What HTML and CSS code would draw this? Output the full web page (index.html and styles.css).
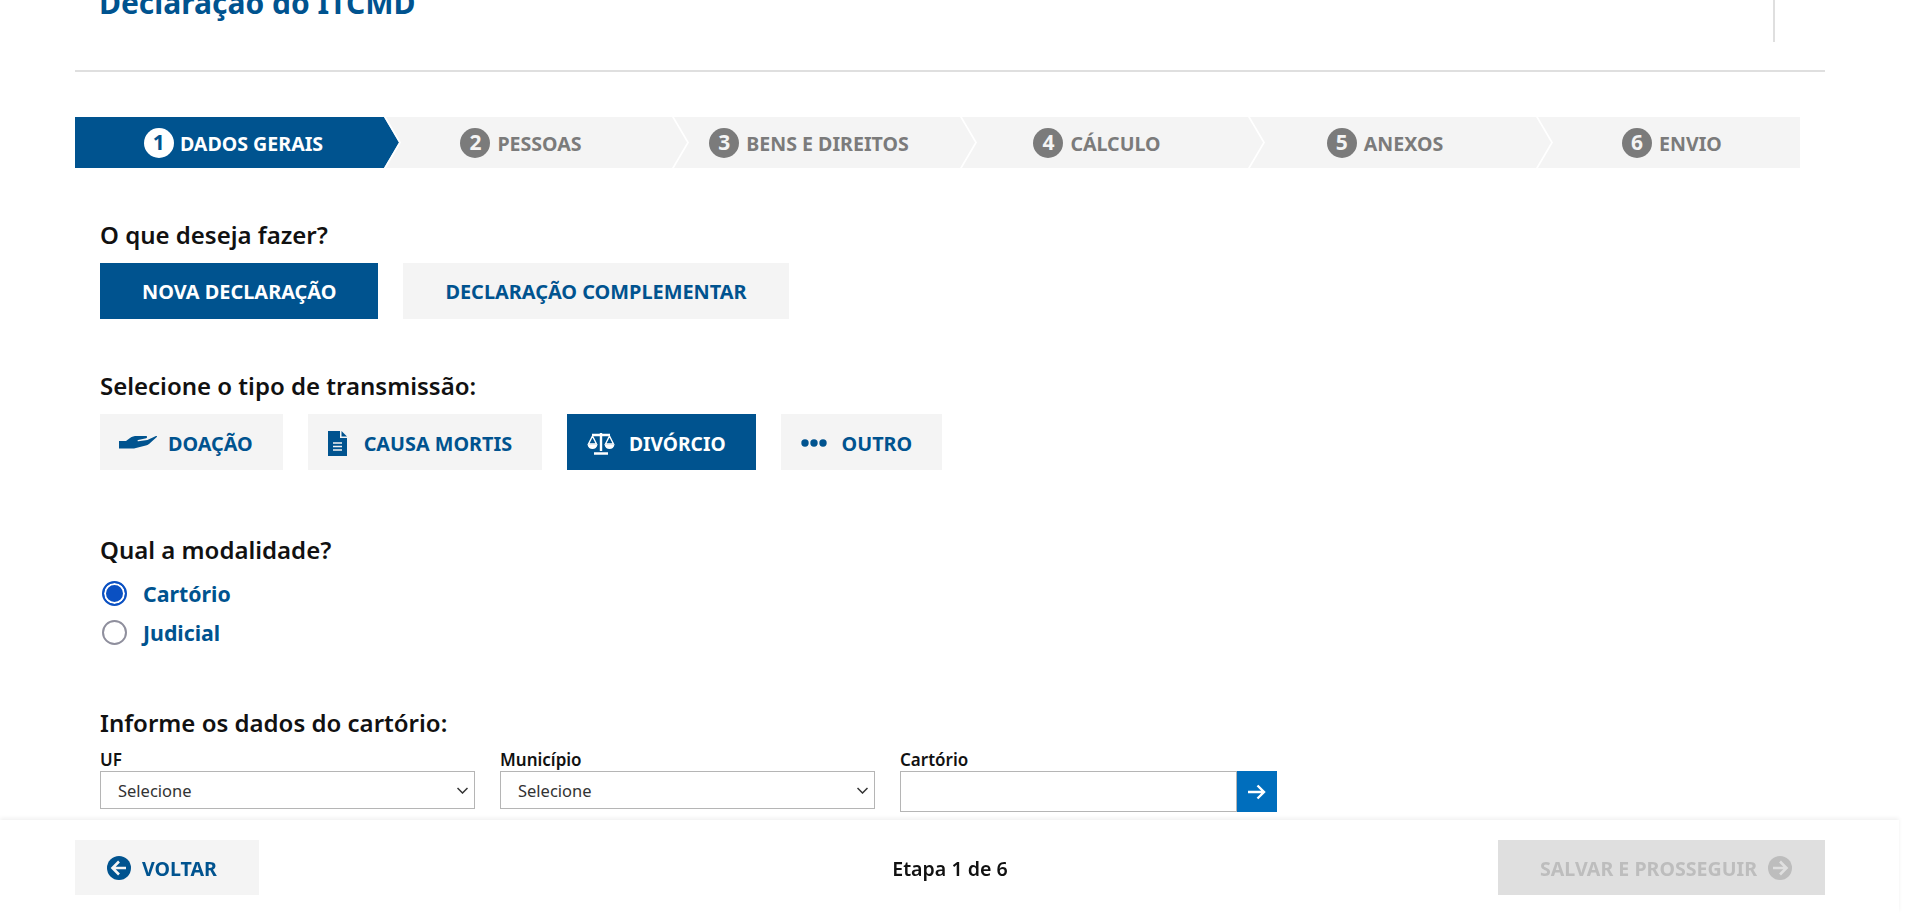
FILE: index.html
```html
<!DOCTYPE html>
<html lang="pt-BR">
<head>
  <meta charset="utf-8">
  <title>Declaração do ITCMD</title>
  <link rel="stylesheet" href="styles.css">
</head>
<body>
  <div class="page">
    <header class="top">
      <h1 class="title">Declaração do ITCMD</h1>
      <div class="top-sep"></div>
    </header>

    <ol class="steps">
      <li class="step active"><span class="num">1</span><span class="label">DADOS GERAIS</span></li>
      <li class="step"><span class="num">2</span><span class="label">PESSOAS</span></li>
      <li class="step"><span class="num">3</span><span class="label">BENS E DIREITOS</span></li>
      <li class="step"><span class="num">4</span><span class="label">CÁLCULO</span></li>
      <li class="step"><span class="num">5</span><span class="label">ANEXOS</span></li>
      <li class="step"><span class="num">6</span><span class="label">ENVIO</span></li>
    </ol>

    <section class="block block-action">
      <h2 class="question">O que deseja fazer?</h2>
      <div class="choices">
        <button class="choice wide selected">NOVA DECLARAÇÃO</button>
        <button class="choice wide">DECLARAÇÃO COMPLEMENTAR</button>
      </div>
    </section>

    <section class="block block-type">
      <h2 class="question">Selecione o tipo de transmissão:</h2>
      <div class="choices">
        <button class="choice">
          <svg class="ico ico-hand" width="38" height="14" viewBox="0 0 38 14"><path fill="currentColor" d="M0 5h7l4-3c2-1.500 4-2 7-2h9c1.300 0 1.500 1.800.2 2.200l-8 1.800c-1 .3-.8 1.300.2 1.200l9-1.200L37 0c.8-.3 1.300.4.8 1L30 8c-1 .9-2 1.400-3.200 1.600L15 12.500H0z"/></svg>
          DOAÇÃO
        </button>
        <button class="choice">
          <svg class="ico ico-file" width="19" height="25" viewBox="0 0 19 25"><path fill="currentColor" d="M0 0h12v7h7v18H0z"/><path fill="currentColor" d="M13.500 0 19 5.500h-5.500z"/><path stroke="#f4f4f4" stroke-width="1.500" d="M5 12h9M5 15.500h9M5 19h9"/></svg>
          CAUSA MORTIS
        </button>
        <button class="choice tight selected">
          <svg class="ico" width="28" height="23" viewBox="0 0 28 23" fill="none" stroke="currentColor" stroke-width="1.800"><path d="M5 3h18M14 1v18M7 21.500h14" stroke-width="2.400"/><path d="M5.500 4 1.500 12h8zM22.500 4l-4 8h8z" stroke-width="1.400"/><path fill="currentColor" stroke="none" d="M.5 12.500h10C10 15.500 8 17 5.500 17S1 15.500.5 12.500zM17.500 12.500h10c-.5 3-2.500 4.500-5 4.500s-4.500-1.500-5-4.500z"/></svg>
          DIVÓRCIO
        </button>
        <button class="choice">
          <svg class="ico ico-dots" width="26" height="8" viewBox="0 0 26 8" fill="currentColor"><circle cx="4" cy="4" r="3.700"/><circle cx="13" cy="4" r="3.700"/><circle cx="22" cy="4" r="3.700"/></svg>
          OUTRO
        </button>
      </div>
    </section>

    <section class="block block-mode">
      <h2 class="question">Qual a modalidade?</h2>
      <label class="radio-row"><input class="radio" type="radio" name="modalidade" checked>Cartório</label>
      <label class="radio-row"><input class="radio" type="radio" name="modalidade">Judicial</label>
    </section>

    <section class="block block-office">
      <h2 class="question">Informe os dados do cartório:</h2>
      <div class="fields">
        <div class="field">
          <label class="field-label">UF</label>
          <div class="select-wrap">
            <select class="select"><option>Selecione</option></select>
            <svg class="chevron" width="11" height="7" viewBox="0 0 11 7" fill="none" stroke="#333" stroke-width="1.500"><path d="M.5 1 5.500 6l5-5"/></svg>
          </div>
        </div>
        <div class="field">
          <label class="field-label">Município</label>
          <div class="select-wrap">
            <select class="select"><option>Selecione</option></select>
            <svg class="chevron" width="11" height="7" viewBox="0 0 11 7" fill="none" stroke="#333" stroke-width="1.500"><path d="M.5 1 5.500 6l5-5"/></svg>
          </div>
        </div>
        <div class="field field-search">
          <label class="field-label">Cartório</label>
          <div class="search">
            <input class="search-input" type="text">
            <button class="search-btn">
              <svg width="18" height="16" viewBox="0 0 18 16" fill="none" stroke="#fff" stroke-width="2.400"><path d="M0 8h16M9.500 1.500 16 8l-6.500 6.500"/></svg>
            </button>
          </div>
        </div>
      </div>
    </section>
  </div>

  <footer class="footer">
    <button class="foot-btn back">
      <svg width="24" height="24" viewBox="0 0 24 24"><circle cx="12" cy="12" r="12" fill="currentColor"/><path fill="none" stroke="#f4f4f4" stroke-width="2.600" d="M19 12H6M12 5.500 5.500 12l6.500 6.500"/></svg>
      <span class="foot-text">VOLTAR</span>
    </button>
    <div class="stage">Etapa 1 de 6</div>
    <button class="foot-btn next" disabled>
      <span class="foot-text">SALVAR E PROSSEGUIR</span>
      <svg width="24" height="24" viewBox="0 0 24 24"><circle cx="12" cy="12" r="12" fill="currentColor"/><path fill="none" stroke="#dfdfdf" stroke-width="2.600" d="M5 12h13M12 5.500l6.500 6.500-6.500 6.500"/></svg>
    </button>
  </footer>
</body>
</html>
```

FILE: styles.css
```css
html, body {
  margin: 0;
  height: 100%;
  overflow: hidden;
  background: #fff;
}

body {
  font-family: "Noto Sans", "Open Sans", sans-serif;
  color: #111;
}

button {
  font-family: inherit;
  border: 0;
}

.page {
  padding: 0 95px 0 75px;
}

.top {
  height: 90px;
  margin-top: -20px;
  margin-bottom: 45px;
  padding: 0 50px 0 24px;
  display: flex;
  justify-content: space-between;
  border-bottom: 2px solid #dfdfdf;
}

.title {
  margin: 0;
  padding-top: 2px;
  font-size: 30px;
  line-height: 42px;
  font-weight: 700;
  color: #00538f;
}

.top-sep {
  width: 2px;
  height: 62px;
  background: #dfdfdf;
}

.steps {
  list-style: none;
  margin: 0 25px 0 0;
  padding: 0;
  height: 51px;
  display: grid;
  grid-template-columns: 309px 288px 288px 288px 288px 1fr;
  background: #f4f4f4;
}

.step {
  position: relative;
  display: flex;
  align-items: center;
  justify-content: center;
  gap: 7px;
  padding-right: 14px;
  font-size: 19.6px;
  font-weight: 700;
  color: #7b7b7b;
}

.step:last-child {
  padding-right: 0;
  padding-left: 8px;
}

.step:not(:last-child)::after {
  content: "";
  position: absolute;
  top: 0;
  right: -17px;
  width: 17px;
  height: 51px;
  background: #fff;
  clip-path: polygon(0 0, 2px 0, 17px 50%, 2px 100%, 0 100%, 15px 50%);
  z-index: 1;
}

.step.active {
  color: #fff;
  gap: 6px;
  padding-left: 8px;
  padding-right: 0;
  z-index: 2;
}

.step.active::before {
  content: "";
  position: absolute;
  top: 0;
  left: 0;
  right: -15px;
  bottom: 0;
  background: #00538f;
  clip-path: polygon(0 0, calc(100% - 15px) 0, 100% 50%, calc(100% - 15px) 100%, 0 100%);
}

.num {
  position: relative;
  width: 30px;
  height: 30px;
  border-radius: 50%;
  background: #7b7b7b;
  color: #f4f4f4;
  font-size: 21px;
  line-height: 28px;
  text-align: center;
}

.label {
  position: relative;
  padding-top: 2px;
}

.step.active .num {
  background: #fff;
  color: #00538f;
}

.block {
  padding-left: 25px;
}

.question {
  margin: 0;
  font-size: 24px;
  line-height: 32px;
  font-weight: 600;
  color: #111;
}

.block-action {
  padding-top: 51px;
}

.block-type {
  padding-top: 51px;
}

.block-mode {
  padding-top: 64px;
}

.block-office {
  padding-top: 55px;
}

.choices {
  display: flex;
  gap: 25px;
  margin-top: 12px;
}

.choice {
  height: 56px;
  padding: 2px 30px 0 20px;
  display: flex;
  align-items: center;
  gap: 14px;
  background: #f4f4f4;
  color: #00538f;
  font-size: 19.8px;
  font-weight: 700;
}

.choice.wide {
  padding: 0 42px;
  font-size: 19.9px;
}

.choice.tight {
  font-size: 19.2px;
}

.choice.selected {
  background: #00538f;
  color: #fff;
}

.ico-hand {
  margin: 0 -3px 0 -1px;
}

.ico-file {
  margin-right: 3px;
}

.ico-dots {
  margin-right: 1px;
}

.block-mode .question {
  margin-bottom: 8px;
}

.radio-row {
  display: flex;
  align-items: center;
  gap: 16px;
  height: 39px;
  padding-left: 2px;
  font-size: 21.3px;
  font-weight: 700;
  color: #00538f;
}

.radio {
  appearance: none;
  margin: 0;
  width: 25px;
  height: 25px;
  border: 2px solid #8f8f9d;
  border-radius: 50%;
  background: #fff;
}

.radio:checked {
  border-color: #0a50c2;
  background: #0a50c2;
  box-shadow: inset 0 0 0 2px #fff;
}

.fields {
  display: flex;
  gap: 25px;
  margin-top: 9px;
}

.field {
  display: flex;
  flex-direction: column;
  width: 375px;
}

.field-search {
  width: 377px;
}

.field-label {
  font-size: 17px;
  line-height: 23px;
  font-weight: 600;
  color: #111;
}

.select-wrap {
  position: relative;
  height: 38px;
}

.select {
  appearance: none;
  width: 100%;
  height: 38px;
  padding: 0 10px 0 17px;
  border: 1px solid #b5b5b5;
  border-radius: 0;
  background: #fff;
  color: #333;
  font-family: inherit;
  font-size: 16.5px;
}

.chevron {
  position: absolute;
  top: 16px;
  right: 7px;
  pointer-events: none;
}

.search {
  display: flex;
  height: 41px;
}

.search-input {
  flex: 1;
  min-width: 0;
  box-sizing: border-box;
  height: 41px;
  border: 1px solid #b5b5b5;
  border-radius: 0;
  outline: 0;
}

.search-btn {
  width: 40px;
  padding: 0;
  display: flex;
  align-items: center;
  justify-content: center;
  background: #006ebd;
}

.footer {
  position: fixed;
  left: 0;
  bottom: 0;
  width: 1899px;
  height: 93px;
  box-sizing: border-box;
  padding: 20px 74px 18px 75px;
  display: grid;
  grid-template-columns: 1fr auto 1fr;
  align-items: center;
  background: #fff;
  box-shadow: 0 -2px 4px rgba(0, 0, 0, 0.06);
}

.foot-btn {
  height: 55px;
  display: flex;
  align-items: center;
  gap: 11px;
  font-size: 19.6px;
  font-weight: 700;
}

.foot-text {
  padding-top: 2px;
}

.back {
  width: 184px;
  padding: 0 0 0 32px;
  background: #f4f4f4;
  color: #00538f;
}

.next {
  width: 327px;
  padding: 0 0 0 42px;
  justify-self: end;
  background: #dfdfdf;
  color: #bdbdbd;
}

.stage {
  padding-top: 2px;
  font-size: 19.6px;
  font-weight: 600;
  color: #111;
}
```
